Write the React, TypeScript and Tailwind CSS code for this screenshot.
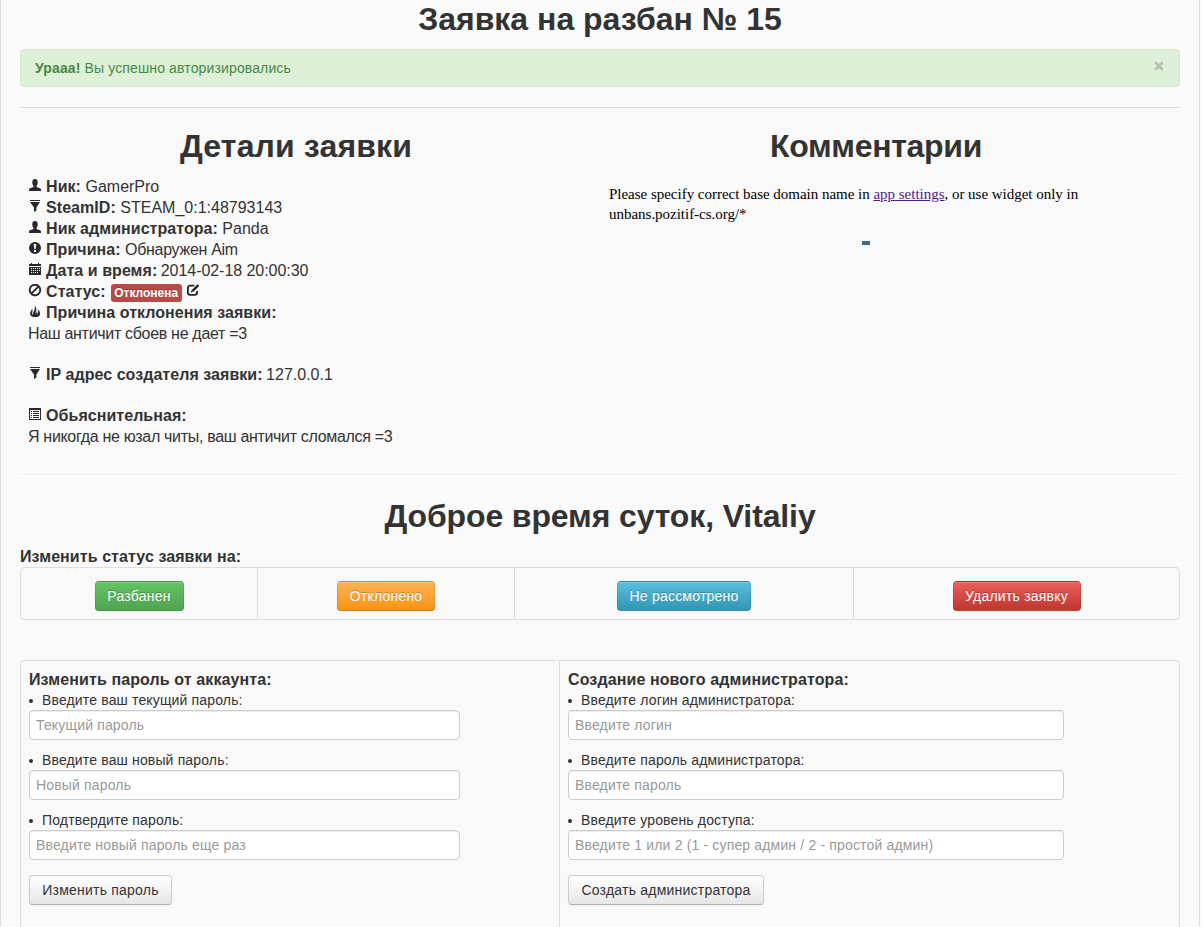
import type { ReactNode } from "react";

const icons: Record<string, ReactNode> = {
  user: <path d="M4.300 3.200C4.300 1 5.300 0 7 0s2.700 1 2.700 3.200c0 1.700-.5 2.900-1.200 3.700v1l3.500 1.300c.8.3 1 .8 1 1.500V12H1v-1.300c0-.7.2-1.200 1-1.500l3.500-1.300v-1C4.800 6.100 4.300 4.900 4.300 3.200Z" />,
  filter: <path d="M2 0h10v1H2zM2 2h10L8.400 7.500V10.500L6 12V7.500z" />,
  alert: <path fillRule="evenodd" d="M7 0a6 6 0 1 1 0 12A6 6 0 0 1 7 0ZM5.700 2l.6 5h1.400l.6-5zM6 8v2h2V8z" />,
  calendar: <path fillRule="evenodd" d="M1 1h2V0h1v1h6V0h1v1h2v2H1zM1 4h12v8H1zM3 5v1h1V5zm2 0v1h1V5zm2 0v1h1V5zm2 0v1h1V5zm2 0v1h1V5zM3 7v1h1V7zm2 0v1h1V7zm2 0v1h1V7zm2 0v1h1V7zm2 0v1h1V7zM3 9v1h1V9zm2 0v1h1V9zm2 0v1h1V9zm2 0v1h1V9z" />,
  ban: <path d="M2.800 9.200a5.100 5.100 0 1 1 8.400-6.400 5.100 5.100 0 0 1-8.400 6.400ZM3.600 9.400 10.400 2.600" fill="none" stroke="#292929" strokeWidth="1.900" />,
  fire: <path d="M6.800 0c.3 1.700 1.700 2.600 1.600 4.800-.1 1.500-1 2.300-.8 3.600.6-.3 1-1 .9-2 1 .8 1.300 2.100.7 3.300 1.300-1.200 1.100-3.200.3-5.300 2.500 1.300 3.500 4.500 1.700 6.500-.6.7-1.500 1.100-2.500 1.100H5.900C3.400 11.900 1.700 10 2.100 7.900c.3-1.500 1.500-2 1.700-3.900C4.900 5 4.700 6.600 4.200 7.700c-.4 1 0 1.600.7 2.200-.3-1.600.4-2.500 1.100-3.800C6.900 4.400 7 2 6.800 0Z" />,
  list: <path fillRule="evenodd" d="M1 0h12v12H1zM2 2v9h10V2zM3 3h1v1H3zm2 0h6v1H5zM3 5h1v1H3zm2 0h6v1H5zM3 7h1v1H3zm2 0h6v1H5zM3 9h1v1H3zm2 0h6v1H5z" />,
  edit: (
    <g fill="none" stroke="#222" strokeWidth="1.800">
      <path d="M8.300 1.700H4.200Q1.900 1.700 1.900 4v4.600q0 2.300 2.300 2.300h4.600q2.300 0 2.300-2.300V7" />
      <path d="M6.400 7.100 12.400 1.100" strokeWidth="2.300" />
      <path d="m4.700 8.800.7-2.300 1.600 1.600Z" fill="#222" stroke="none" />
    </g>
  ),
};

function Icon({ name }: { name: string }) {
  return (
    <svg viewBox="0 0 14 14" className="inline-block w-3.5 h-3.5 mt-px align-text-top fill-[#292929]">
      {icons[name]}
    </svg>
  );
}

function Row({ icon, label, children }: { icon: string; label: string; children?: ReactNode }) {
  return (
    <div className="h-[21px] whitespace-nowrap">
      <Icon name={icon} /> <b className="-ml-[0.4px] tracking-[0.05px]">{label}</b> {children}
    </div>
  );
}

function Title({ children, className = "" }: { children: ReactNode; className?: string }) {
  return <h2 className={`text-center text-[32px] leading-10 font-bold ${className}`}>{children}</h2>;
}

const btn = "h-[30px] text-sm leading-5 tracking-[0.22px] rounded-[4px] border whitespace-nowrap shadow-[inset_0_1px_0_rgba(255,255,255,.2),0_1px_2px_rgba(0,0,0,.05)]";

const statuses = [
  { label: "Разбанен", cell: "w-[236px]", color: "w-[89px] from-[#62c462] to-[#51a351]" },
  { label: "Отклонено", cell: "w-[257px] border-l", color: "w-[98px] from-[#fbb450] to-[#f89406]" },
  { label: "Не рассмотрено", cell: "w-[339px] border-l", color: "w-[134px] from-[#5bc0de] to-[#2f96b4]" },
  { label: "Удалить заявку", cell: "w-[326px] border-l", color: "w-[128px] from-[#ee5f5b] to-[#bd362f]" },
];

const passwordFields = [
  ["Введите ваш текущий пароль:", "Текущий пароль"],
  ["Введите ваш новый пароль:", "Новый пароль"],
  ["Подтвердите пароль:", "Введите новый пароль еще раз"],
];

const adminFields = [
  ["Введите логин администратора:", "Введите логин"],
  ["Введите пароль администратора:", "Введите пароль"],
  ["Введите уровень доступа:", "Введите 1 или 2 (1 - супер админ / 2 - простой админ)"],
];

function Form({ title, fields, width, submit, submitWidth }: { title: string; fields: string[][]; width: string; submit: string; submitWidth: string }) {
  return (
    <form className="p-2" onSubmit={(event) => event.preventDefault()}>
      <div className="text-base leading-[21px] font-bold tracking-[0.11px]">{title}</div>
      {fields.map(([label, placeholder]) => (
        <label key={label} className="block mb-2.5">
          <span className="flex items-center h-5 text-sm leading-5 tracking-[0.15px]">
            <i className="w-1 h-1 mt-0.5 mr-[9px] rounded-full bg-[#333]" />
            {label}
          </span>
          <input
            placeholder={placeholder}
            className={`${width} block h-[30px] px-1.5 py-1 text-sm leading-5 tracking-[0.16px] bg-white border border-[#ccc] rounded-[4px] shadow-[inset_0_1px_1px_rgba(0,0,0,.075)] outline-none placeholder:text-[#999]`}
          />
        </label>
      ))}
      <button className={`${btn} ${submitWidth} mt-[5px] bg-linear-to-b from-white to-[#e6e6e6] border-[#ccc] border-b-[#b3b3b3]`}>{submit}</button>
    </form>
  );
}

export default function App() {
  return (
    <div className="w-[1202px] h-[927px] overflow-hidden bg-[#fafafa]">
      <div className="w-[1200px] h-full px-[19px] border-x border-[#ddd] text-[#333] font-['Liberation_Sans',Arial,sans-serif]">
        <div className="-mt-px mb-2.5">
          <Title>Заявка на разбан № 15</Title>
        </div>

        <div className="flex justify-between h-[38px] pl-3.5 pr-[15px] mb-5 border border-[#d6e9c6] rounded-[4px] bg-[#dff0d8] text-[#468847] text-sm leading-[36px] tracking-[0.13px]">
          <span><b>Урааа!</b> Вы успешно авторизировались</span>
          <svg viewBox="0 0 10 10" className="w-2.5 h-2.5 mt-[11px] opacity-20">
            <path d="m1.200 1.200 7.600 7.600m0-7.600-7.600 7.600" stroke="#000" strokeWidth="2.600" />
          </svg>
        </div>

        <section className="grid grid-cols-[552px_1fr] h-[346px] border-t border-[#ddd] bg-[#f9f9f9]">
          <div className="pl-2 pt-[18px]">
            <Title className="pr-2 tracking-[0.13px]">Детали заявки</Title>
            <div className="mt-2.5 text-base leading-[21px]">
              <Row icon="user" label="Ник:">GamerPro</Row>
              <Row icon="filter" label="SteamID:">STEAM_0:1:48793143</Row>
              <Row icon="user" label="Ник администратора:">Panda</Row>
              <Row icon="alert" label="Причина:"><span className="tracking-[-0.3px]">Обнаружен Aim</span></Row>
              <Row icon="calendar" label="Дата и время:"><span className="-ml-px tracking-[-0.05px]">2014-02-18 20:00:30</span></Row>
              <Row icon="ban" label="Статус:">
                <span className="inline-block ml-[0.6px] h-[18px] w-[71px] text-center align-baseline text-xs leading-[18px] font-bold text-white bg-[#b94a48] rounded-[3px] [text-shadow:0_-1px_0_rgba(0,0,0,.25)]">Отклонена</span> <Icon name="edit" />
              </Row>
              <Row icon="fire" label="Причина отклонения заявки:" />
              <div className="tracking-[-0.31px]">Наш античит сбоев не дает =3</div>
              <div className="mt-5"><Row icon="filter" label="IP адрес создателя заявки:"><span className="-ml-px">127.0.0.1</span></Row></div>
              <div className="mt-5"><Row icon="list" label="Обьяснительная:" /></div>
              <div className="tracking-[-0.32px]">Я никогда не юзал читы, ваш античит сломался =3</div>
            </div>
          </div>
          <div className="pt-[18px]">
            <Title className="tracking-[-0.3px]">Комментарии</Title>
            <div className="ml-[37px] mt-[18px] w-[500px] text-[15px] leading-5 tracking-[-0.02px] text-black font-['Liberation_Serif','Times_New_Roman',serif]">
              Please specify correct base domain name in <a href="#" className="underline text-[#551a8b]">app settings</a>, or use widget only in<br />
              unbans.pozitif-cs.org/*
            </div>
            <div className="ml-[290px] mt-[17px] w-2 h-1 bg-[#45688e]" />
          </div>
        </section>

        <hr className="mt-[21px] mb-5 h-0.5 border-t border-b border-t-[#eee] border-b-white" />
        <Title className="tracking-[-0.12px]">Доброе время суток, Vitaliy</Title>
        <div className="mt-2.5 text-base leading-[21px] font-bold tracking-[0.08px]">Изменить статус заявки на:</div>

        <div className="flex h-[53px] mb-10 border border-[#ddd] rounded-[4px] bg-[#f9f9f9]">
          {statuses.map((s) => (
            <div key={s.label} className={`${s.cell} pt-[13px] flex justify-center border-[#ddd]`}>
              <button className={`${btn} ${s.color} bg-linear-to-b border-black/10 border-b-black/25 text-white [text-shadow:0_-1px_0_rgba(0,0,0,.25)]`}>{s.label}</button>
            </div>
          ))}
        </div>

        <div className="grid grid-cols-[538px_1fr] h-[300px] border border-[#ddd] rounded-[4px] bg-[#f9f9f9]">
          <Form title="Изменить пароль от аккаунта:" fields={passwordFields} width="w-[431px]" submit="Изменить пароль" submitWidth="w-[143px]" />
          <div className="border-l border-[#ddd]">
            <Form title="Создание нового администратора:" fields={adminFields} width="w-[496px]" submit="Создать администратора" submitWidth="w-[196px]" />
          </div>
        </div>
      </div>
    </div>
  );
}
